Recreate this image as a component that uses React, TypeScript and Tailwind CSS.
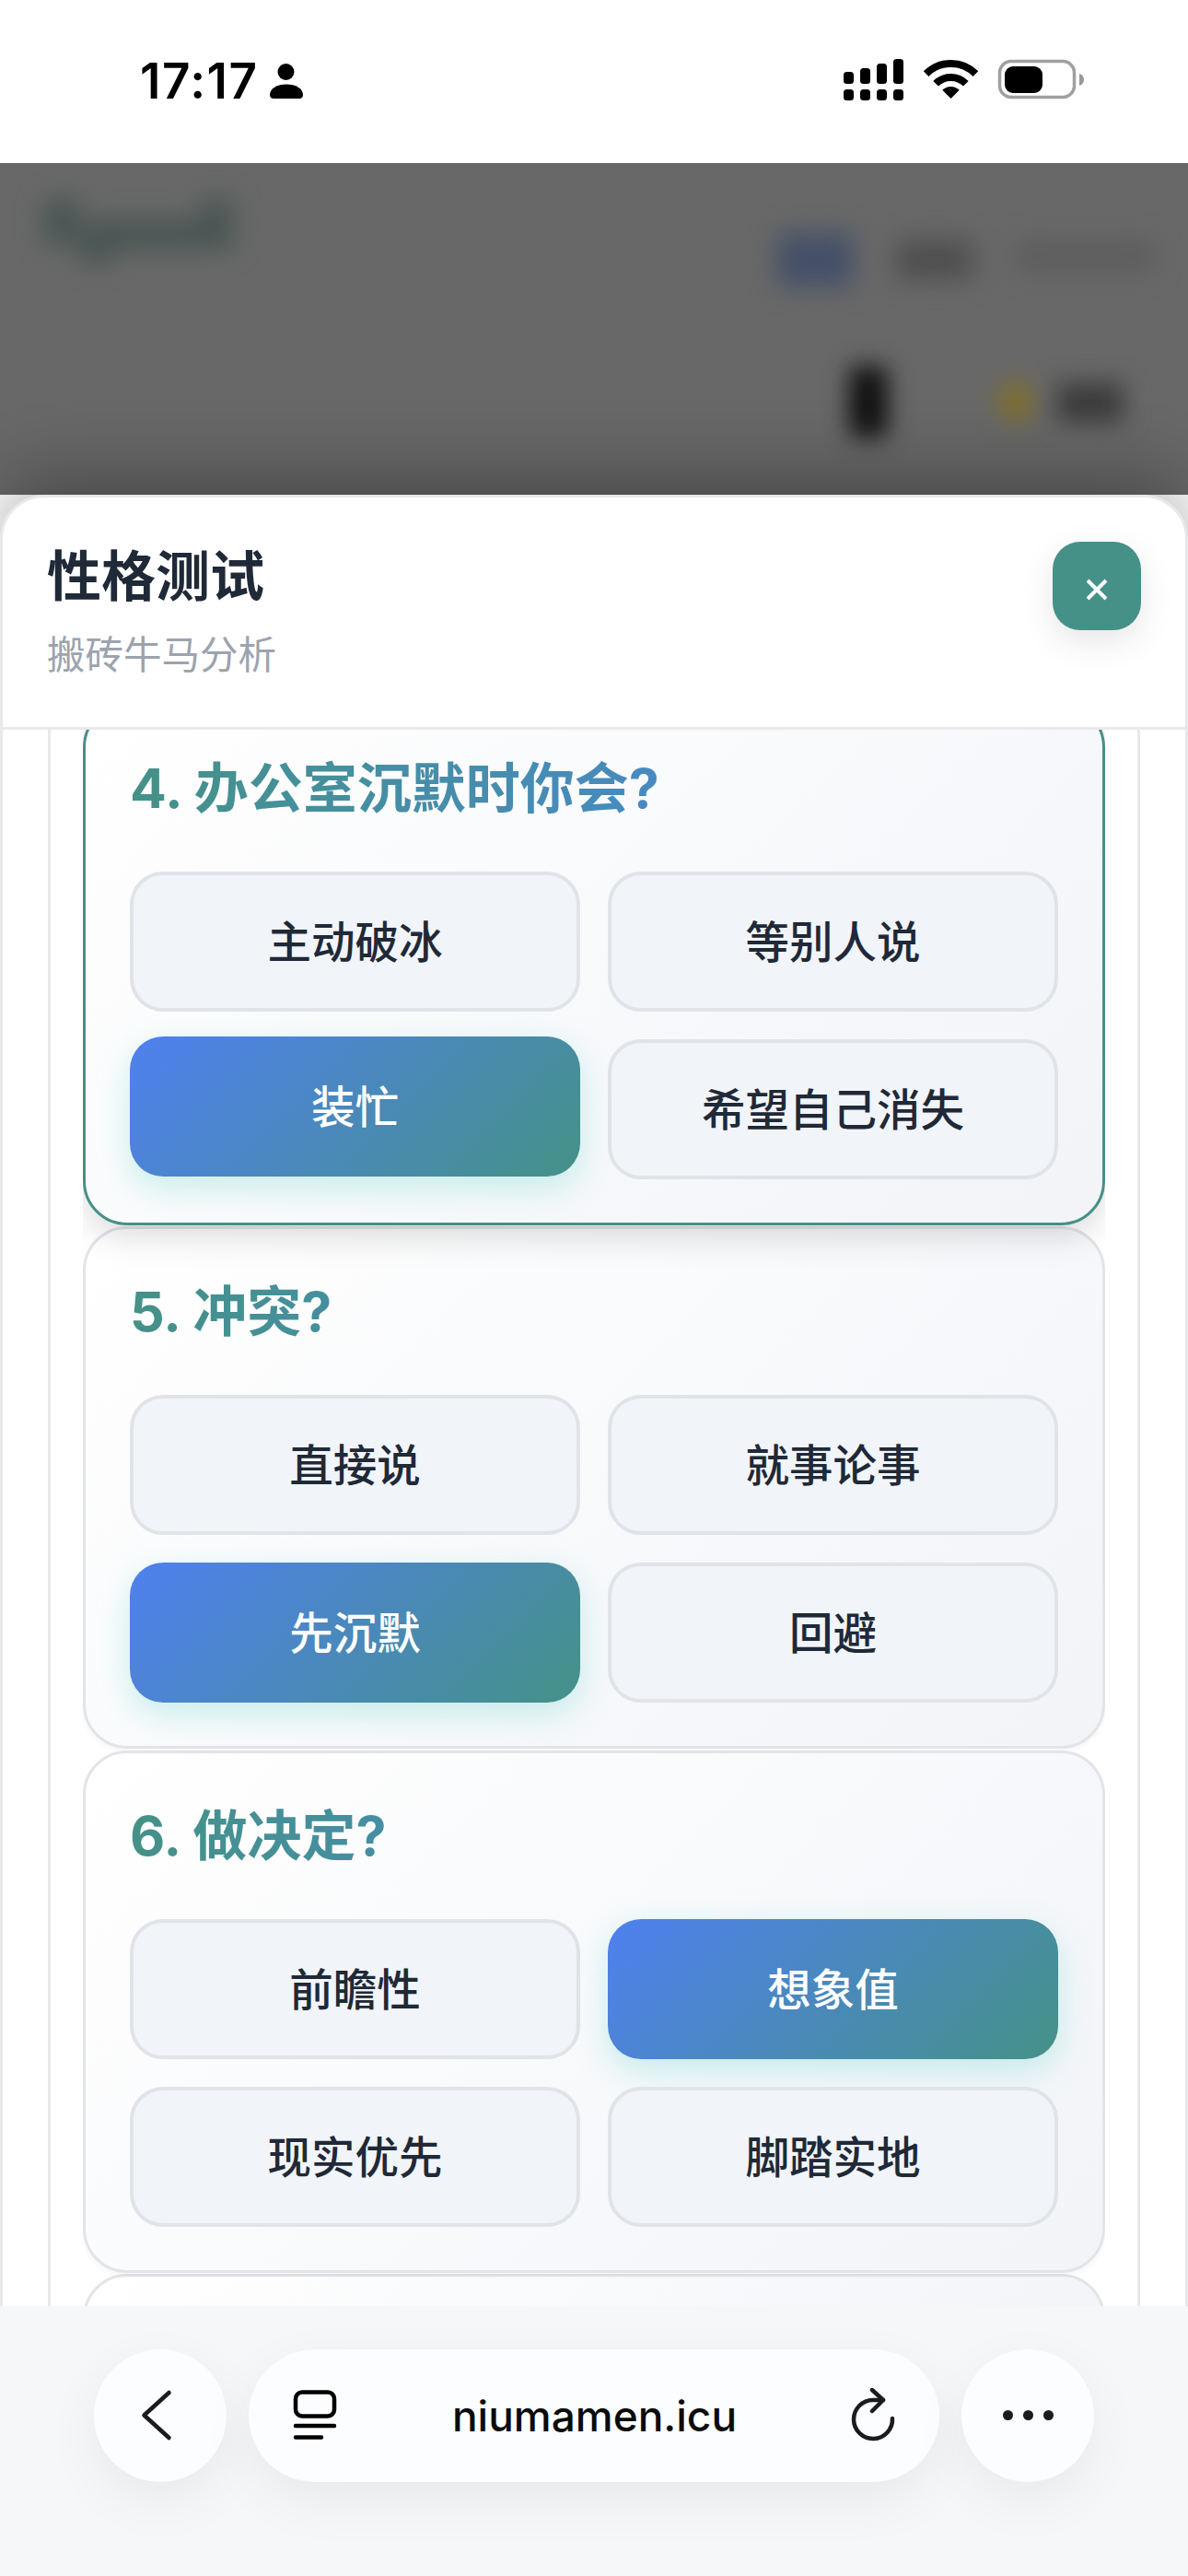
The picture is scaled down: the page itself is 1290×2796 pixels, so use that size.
const QUESTIONS = [
  { title: "4. 办公室沉默时你会?", options: ["主动破冰", "等别人说", "装忙", "希望自己消失"], picked: 2, active: true },
  { title: "5. 冲突?", options: ["直接说", "就事论事", "先沉默", "回避"], picked: 2 },
  { title: "6. 做决定?", options: ["前瞻性", "想象值", "现实优先", "脚踏实地"], picked: 1 },
];

function StatusIcons() {
  return (
    <svg width="261" height="45" viewBox="916 64 261 45" fill="#000">
      <rect x="916" y="78" width="11" height="13" rx="3.5" />
      <rect x="934" y="74" width="11" height="17" rx="3.5" />
      <rect x="952" y="69" width="11" height="22" rx="3.5" />
      <rect x="970" y="64" width="11" height="27" rx="3.5" />
      <rect x="916" y="97" width="11" height="12" rx="3.5" />
      <rect x="934" y="97" width="11" height="12" rx="3.5" />
      <rect x="952" y="97" width="11" height="12" rx="3.5" />
      <rect x="970" y="97" width="11" height="12" rx="3.5" />
      <path d="M1005.6 80.1A38 38 0 0 1 1059.4 80.1" fill="none" stroke="#000" strokeWidth="8" />
      <path d="M1016.2 90.7A23 23 0 0 1 1048.8 90.7" fill="none" stroke="#000" strokeWidth="8" />
      <path d="M1032.5 107L1023.3 97.8A13 13 0 0 1 1041.7 97.8Z" />
      <rect x="1085.5" y="66.5" width="81" height="39" rx="12.5" fill="none" stroke="#a0a0a0" strokeWidth="3.5" />
      <rect x="1091" y="72" width="41" height="29" rx="9" />
      <path d="M1172 80C1175.5 81 1177 83.5 1177 86.5C1177 89.5 1175.5 92 1172 93Z" fill="#999" />
    </svg>
  );
}

function PersonIcon() {
  return (
    <svg width="36" height="38" viewBox="0 0 36 38" fill="#000">
      <circle cx="17.5" cy="9" r="9" />
      <path d="M0 34C0 27 8 22.5 18 22.5C28 22.5 36 27 36 34C36 36.5 34.5 38 32 38H4C1.5 38 0 36.5 0 34Z" />
    </svg>
  );
}

function BlurredPage() {
  return (
    <div className="h-[360px] shrink-0 bg-[#686868] overflow-hidden">
      <div className="flex justify-between pt-[40px] pl-[46px] pr-[38px] h-[170px]">
        <svg width="210" height="70" viewBox="0 0 210 70" className="blur-[14px]" fill="#475552">
          <rect x="2" y="0" width="38" height="48" />
          <rect x="46" y="22" width="160" height="32" />
          <rect x="172" y="0" width="34" height="50" />
          <rect x="40" y="40" width="36" height="28" />
        </svg>
        <div className="flex gap-[48px] pt-[36px] blur-[14px]">
          <div className="w-[82px] h-[58px] bg-[#445068]" />
          <div className="w-[82px] h-[42px] mt-[8px] bg-[#4e4e4e]" />
          <div className="w-[148px] h-[30px] mt-[10px] bg-[#5c5c5c]" />
        </div>
      </div>
      <div className="flex justify-end pt-[50px] pr-[70px]">
        <div className="w-[42px] h-[78px] rounded-[10px] bg-[#101010] blur-[13px]" />
        <div className="w-[38px] h-[44px] mt-[17px] ml-[120px] rounded-full bg-[#80702e] blur-[13px]" />
        <div className="w-[72px] h-[44px] mt-[18px] ml-[26px] bg-[#3c3c3c] blur-[13px]" />
      </div>
    </div>
  );
}

function QuestionCard({ title, options, picked, active }: { title: string; options: string[]; picked: number; active?: boolean }) {
  return (
    <div
      className={`relative rounded-[48px] border-[3px] bg-[linear-gradient(135deg,#ffffff,#f2f4f8)] px-[48px] pt-[48px] pb-[47px] ${
        active ? "z-10 border-[#459187] shadow-[0_12px_36px_rgba(0,0,0,0.14)]" : "border-[#e2e4e8] shadow-[0_3px_6px_rgba(0,0,0,0.04)]"
      }`}
    >
      <h3 className="h-[84px] leading-[84px] text-[59px] font-bold bg-gradient-to-r from-[#459187] to-[#4f80ea] bg-clip-text text-transparent">
        {title}
      </h3>
      <div className="grid grid-cols-2 gap-[30px] mt-[48px]">
        {options.map((opt, i) => (
          <button
            key={opt}
            className={
              i === picked
                ? `h-[152px] pt-[2px] rounded-[36px] bg-[linear-gradient(135deg,#4f80ef,#459187)] text-white text-[47.5px] font-medium shadow-[0_12px_36px_rgba(78,205,196,0.3)] ${active ? "-translate-y-[3px]" : ""}`
                : "h-[152px] pt-[2px] rounded-[36px] border-[4px] border-[#e0e3e8] bg-[#f1f4f9] text-[#1f2937] text-[47.5px] font-medium"
            }
          >
            {opt}
          </button>
        ))}
      </div>
    </div>
  );
}

function Sheet() {
  return (
    <div className="relative z-10 flex-1 min-h-0 flex flex-col rounded-t-[48px] border-x-[3px] border-t-[3px] border-[#e8e9eb] bg-white shadow-[0_-20px_80px_rgba(0,0,0,0.3)]">
      <div className="shrink-0 flex justify-between items-start pl-[48px] pr-[48px] pt-[44px] pb-[48px] border-b-[3px] border-[#e8e9eb]">
        <div>
          <h2 className="h-[84px] leading-[84px] text-[59px] font-bold text-[#1f2937]">性格测试</h2>
          <p className="h-[59px] leading-[59px] mt-[14px] text-[41.5px] text-[#9ca3af]">搬砖牛马分析</p>
        </div>
        <button className="mt-[4px] w-[96px] h-[96px] rounded-[30px] bg-[#459187] flex items-center justify-center pt-[8px] shadow-[0_12px_36px_rgba(0,0,0,0.1)]">
          <svg width="24" height="24" viewBox="0 0 24 24" fill="none" stroke="#fff" strokeWidth="4">
            <path d="M2 2L22 22M22 2L2 22" />
          </svg>
        </button>
      </div>
      <div className="flex-1 min-h-0 mx-[49px] border-x-[3px] border-[#e8e9eb] px-[35px]">
        <div className="h-full overflow-hidden">
          <div className="-mt-[29.5px] flex flex-col gap-[1.5px]">
            {QUESTIONS.map((q) => (
              <QuestionCard key={q.title} {...q} />
            ))}
            <div className="h-[120px] rounded-[48px] border-[3px] border-[#e2e4e8] bg-[linear-gradient(135deg,#ffffff,#f2f4f8)]" />
          </div>
        </div>
      </div>
    </div>
  );
}

function BrowserBar() {
  return (
    <div className="relative z-20 h-[293px] shrink-0 bg-[#f6f7f9] flex gap-[24px] pt-[47px] pl-[102px]">
      <button className="w-[144px] h-[144px] rounded-full bg-[#fcfdfe] flex items-center justify-center shadow-[0_20px_60px_rgba(0,0,0,0.06)]">
        <svg width="144" height="144" viewBox="0 0 144 144" fill="none" stroke="#1c1c1e" strokeWidth="4.5" strokeLinecap="round" strokeLinejoin="round">
          <path d="M81.5 47L54.5 71.5L81.5 96" />
        </svg>
      </button>
      <div className="w-[750px] h-[144px] rounded-full bg-[#fcfdfe] flex items-center justify-between pl-[47px] pr-[46px] shadow-[0_20px_60px_rgba(0,0,0,0.06)]">
        <svg width="50" height="56" viewBox="0 0 50 56" fill="none" stroke="#000" strokeWidth="4.5" strokeLinecap="round">
          <rect x="4" y="2.5" width="42" height="26" rx="7" />
          <path d="M4 39H46M4 51.5H32" />
        </svg>
        <span className="text-[46px] leading-[60px] font-medium text-[#0b0b0c] font-['Inter',sans-serif]">niumamen.icu</span>
        <svg width="50" height="60" viewBox="0 0 50 60" fill="none" stroke="#1c1c1e" strokeWidth="4.5" strokeLinecap="round" strokeLinejoin="round">
          <path d="M45 33A21 21 0 1 1 24 13H35" />
          <path d="M23 2L35 13L23 25" />
        </svg>
      </div>
      <button className="w-[144px] h-[144px] rounded-full bg-[#fcfdfe] flex items-center justify-center gap-[11px] pb-[2px] shadow-[0_20px_60px_rgba(0,0,0,0.06)]">
        <span className="w-[11px] h-[11px] rounded-full bg-[#1c1c1e]" />
        <span className="w-[11px] h-[11px] rounded-full bg-[#1c1c1e]" />
        <span className="w-[11px] h-[11px] rounded-full bg-[#1c1c1e]" />
      </button>
    </div>
  );
}

export default function App() {
  return (
    <div className="w-[1290px] h-[2796px] flex flex-col overflow-hidden bg-white font-['Inter','Noto_Sans_CJK_SC',sans-serif]">
      <div className="h-[177px] shrink-0 bg-white flex justify-between pl-[152px] pr-[113px] pt-[64px]">
        <div className="flex items-start gap-[12px]">
          <span className="text-[53px] leading-[48px] font-semibold tracking-[1.5px] text-black">17:17</span>
          <span className="pt-[5px]">
            <PersonIcon />
          </span>
        </div>
        <StatusIcons />
      </div>
      <BlurredPage />
      <Sheet />
      <BrowserBar />
    </div>
  );
}
